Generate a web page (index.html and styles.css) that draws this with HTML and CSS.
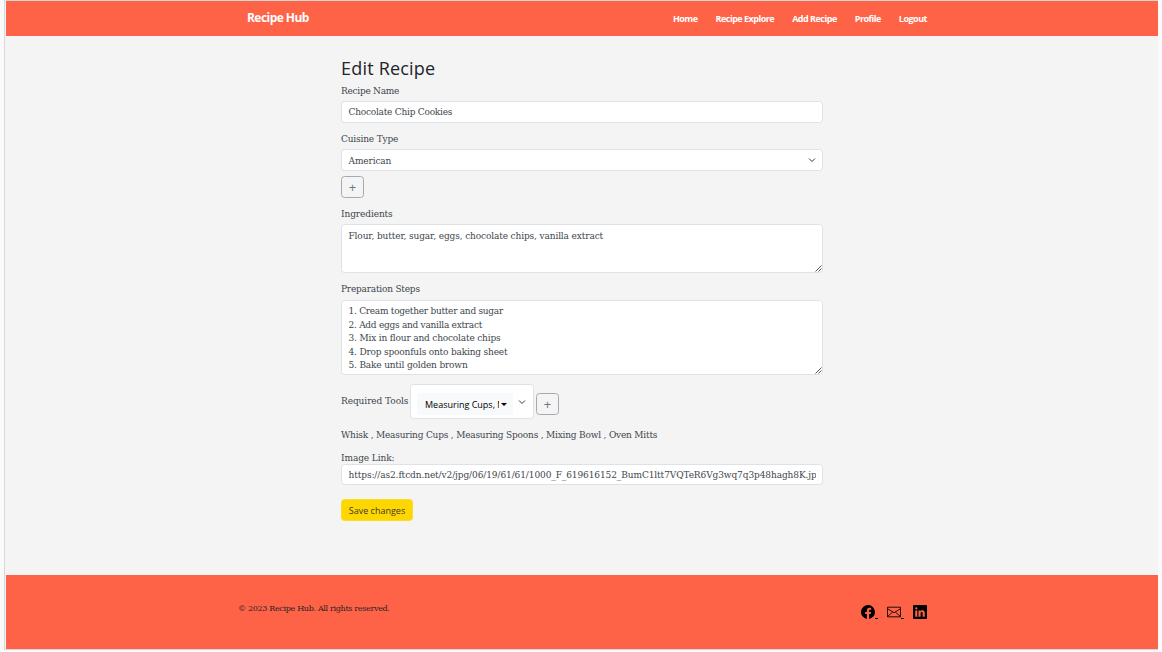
FILE: index.html
```html
<!DOCTYPE html>
<html lang="en">
<head>
<meta charset="utf-8">
<title>Recipe Hub</title>
<link rel="stylesheet" href="styles.css">
</head>
<body>
<div class="page">
  <nav class="navbar">
    <a class="brand">Recipe Hub</a>
    <div class="nav-links">
      <a>Home</a><a>Recipe Explore</a><a>Add Recipe</a><a>Profile</a><a>Logout</a>
    </div>
  </nav>
  <main class="content">
    <h1 class="title">Edit Recipe</h1>
    <label class="label label-name">Recipe Name</label>
    <div class="control name-field"><span>Chocolate Chip Cookies</span></div>
    <label class="label label-cuisine">Cuisine Type</label>
    <div class="control select"><span class="select-value">American</span>
      <svg class="chevron" viewBox="0 0 16 16"><path d="m2 5 6 6 6-6"/></svg>
    </div>
    <button class="add-button add-cuisine">+</button>
    <label class="label label-ingredients">Ingredients</label>
    <div class="control area ingredients"><span>Flour, butter, sugar, eggs, chocolate chips, vanilla extract</span>
      <svg class="grip" viewBox="0 0 7 7"><path d="M.5 6.5 6.5.5M3.5 6.5l3-3"/></svg>
    </div>
    <label class="label label-steps">Preparation Steps</label>
    <div class="control area steps">
      <div class="step-tight">1. Cream together butter and sugar</div>
      <div class="step-tight">2. Add eggs and vanilla extract</div>
      <div>3. Mix in flour and chocolate chips</div>
      <div>4. Drop spoonfuls onto baking sheet</div>
      <div>5. Bake until golden brown</div>
      <svg class="grip" viewBox="0 0 7 7"><path d="M.5 6.5 6.5.5M3.5 6.5l3-3"/></svg>
    </div>
    <div class="tools">
      <label class="label tools-label">Required Tools</label>
      <div class="tools-select">
        <div class="tools-toggle"><span class="tools-value">Measuring Cups, Measuring Spoons</span><i class="caret"></i></div>
        <svg class="chevron" viewBox="0 0 16 16"><path d="m2 5 6 6 6-6"/></svg>
      </div>
      <button class="add-button">+</button>
    </div>
    <p class="tools-list">Whisk , Measuring Cups , Measuring Spoons , Mixing Bowl , Oven Mitts</p>
    <label class="label label-link">Image Link:</label>
    <div class="control link"><span class="link-value">https://as2.ftcdn.net/v2/jpg/06/19/61/61/1000_F_619616152_BumC1ltt7VQTeR6Vg3wq7q3p48hagh8K.jpg</span></div>
    <button class="save">Save changes</button>
  </main>
  <footer class="footer">
    <p class="copyright">© 2023 Recipe Hub. All rights reserved.</p>
    <div class="social">
      <a class="underlined"><svg viewBox="0 0 16 16"><path d="M16 8.05A8 8 0 1 0 6.75 16v-5.62H4.72V8.05h2.03V6.28c0-2.02 1.2-3.13 3.02-3.13.88 0 1.8.16 1.8.16v1.98h-1.01c-1 0-1.31.62-1.31 1.26v1.5h2.23l-.36 2.33H9.25V16A8 8 0 0 0 16 8.05"/></svg></a>
      <a class="underlined"><svg viewBox="0 0 16 16"><path class="outline" d="M.5 2.5h15v11H.5ZM.5 4.2l7.5 4.6 7.5-4.6M.8 13l5.6-4.8M15.2 13 9.6 8.2"/></svg></a>
      <a><svg viewBox="0 0 16 16"><path fill-rule="evenodd" d="M1.2 0h13.6Q16 0 16 1.15v13.7Q16 16 14.8 16H1.2Q0 16 0 14.85V1.15Q0 0 1.2 0ZM4.94 13.4V6.17h-2.4v7.23ZM3.74 5.18a1.25 1.25 0 1 0 0-2.5 1.25 1.25 0 0 0 0 2.5ZM6.27 13.4h2.4V9.36c0-.9.4-1.46 1.2-1.46s1.2.6 1.2 1.6v3.9h2.4V9.25C13.47 7.03 12.3 6 10.7 6c-1.2 0-1.8.65-2.03 1.2V6.17h-2.4Z"/></svg></a>
    </div>
  </footer>
</div>
</body>
</html>
```
FILE: styles.css
```css
* { box-sizing: border-box; }
body {
  margin: 0;
  height: 652px;
  padding: 0 4px 3px 4px;
  overflow: hidden;
  background: #fafafa;
  color: #40464c;
  font: 9px/13.5px "DejaVu Serif", serif;
}
.page {
  display: flex;
  flex-direction: column;
  width: 1154px;
  height: 650px;
  border: solid #d8d8d8;
  border-width: 1px 0 1px 1px;
  padding-left: 1px;
  background: #f4f4f4;
}
.navbar {
  display: flex;
  justify-content: space-between;
  height: 35px;
  flex: none;
  padding: 0 231px 0 241px;
  background: #ff6347;
  color: #fff;
  font: bold 9px/35px "Open Sans", sans-serif;
}
.brand { font-size: 12px; letter-spacing: -.55px; line-height: 34px; }
.nav-links { display: flex; gap: 18px; letter-spacing: -.5px; line-height: 36px; }
.content {
  display: flex;
  flex-direction: column;
  align-items: flex-start;
  flex: 1;
  width: 482px;
  margin-left: 335px;
  padding-top: 21px;
}
.title { margin: 0; color: #212529; font: 400 18px/22px "Open Sans", sans-serif; letter-spacing: .2px; }
.label { display: block; height: 14px; line-height: 14px; white-space: nowrap; }
.label-name { margin-top: 5px; letter-spacing: -.27px; }
.control {
  position: relative;
  flex: none;
  width: 482px;
  height: 22px;
  padding: 3px 6.5px;
  border: 1px solid #dee2e6;
  border-radius: 3.5px;
  background: #fff;
  color: #40464c;
  line-height: 14px;
  white-space: nowrap;
}
.name-field { margin-top: 3px; letter-spacing: -.23px; }
.label-cuisine { margin-top: 9px; letter-spacing: -.17px; }
.select { display: flex; justify-content: space-between; align-items: center; margin-top: 3px; letter-spacing: -.12px; }
.select-value { padding-top: 2px; }
.chevron { width: 8px; height: 8px; fill: none; stroke: #343a40; stroke-width: 2; }
.add-button {
  width: 23px;
  height: 22px;
  padding: 0;
  border: 1px solid #a5aab0;
  border-radius: 3.5px;
  background: transparent;
  color: #6c757d;
  font: 13px/19px "Open Sans", sans-serif;
}
.add-cuisine { margin-top: 5px; }
.label-ingredients { margin-top: 9px; letter-spacing: -.1px; }
.area { line-height: 13.5px; }
.ingredients { height: 49px; margin-top: 3px; padding-top: 5px; letter-spacing: -.13px; }
.grip { position: absolute; right: 0; bottom: 0; width: 7px; height: 7px; fill: none; stroke: #555; }
.label-steps { margin-top: 9px; letter-spacing: -.22px; }
.steps { height: 75px; margin-top: 4px; padding-top: 4px; letter-spacing: -.18px; }
.step-tight { letter-spacing: -.27px; }
.tools { display: flex; margin-top: 9px; }
.tools-label { width: 69px; padding-top: 10px; letter-spacing: -.08px; }
.tools-select {
  display: flex;
  align-items: center;
  width: 124px;
  height: 35px;
  padding: 0 7px 0 6px;
  border: 1px solid #dee2e6;
  border-radius: 3.5px;
  background: #fff;
}
.tools-select .chevron { margin: 0 0 0 auto; }
.tools-toggle {
  display: flex;
  align-items: center;
  width: 96px;
  height: 22px;
  margin-top: 5px;
  padding: 2px 0 0 8px;
  border-radius: 3px;
  background: #f8f9fa;
  color: #000;
  font: 9px/20px "Open Sans", sans-serif;
}
.tools-value { width: 74px; overflow: hidden; white-space: nowrap; }
.caret { margin: -2px 0 0 2px; border: solid transparent; border-width: 3px 3px 0; border-top-color: #000; }
.tools .add-button { margin: 9px 0 0 2px; }
.tools-list { margin: 9px 0 0; line-height: 14px; letter-spacing: -.2px; white-space: nowrap; }
.label-link { height: 13px; margin-top: 9px; letter-spacing: -.1px; }
.link { height: 21px; letter-spacing: -.1px; }
.link-value { display: block; overflow: hidden; }
.save {
  height: 22px;
  width: 72px;
  margin-top: 14px;
  padding: 1px 0 0;
  border: 1px solid #ffdc20;
  border-radius: 3.5px;
  background: #ffd700;
  color: #40392a;
  font: 9px/19px "Open Sans", sans-serif;
}
.footer {
  display: flex;
  flex: none;
  justify-content: space-between;
  height: 74px;
  padding: 26px 231px 0 232px;
  background: #ff6347;
  color: #212529;
}
.copyright { margin: 0; padding-top: 1px; font-size: 8px; line-height: 14px; letter-spacing: -.32px; }
.social { display: flex; gap: 9px; padding-top: 4px; }
.social a { display: flex; align-items: flex-end; height: 14px; }
.social svg { width: 14px; height: 14px; fill: #000; }
.social .outline { fill: none; stroke: #000; }
.underlined::after { content: ""; width: 3px; height: 1px; background: #000; }
```
